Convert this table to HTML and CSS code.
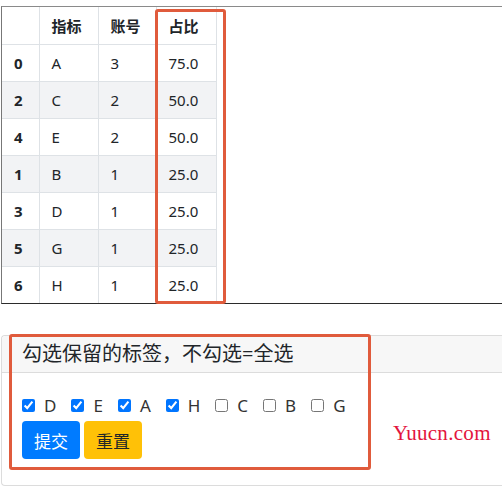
FILE: index.html
```html
<!DOCTYPE html>
<html lang="zh">
<head>
<meta charset="utf-8">
<link rel="stylesheet" href="styles.css">
</head>
<body>
<div class="frame">
  <table class="df">
    <thead>
      <tr><th class="c0"></th><th class="c1">指标</th><th class="c2">账号</th><th class="c3">占比</th></tr>
    </thead>
    <tbody>
      <tr><th>0</th><td>A</td><td>3</td><td>75.0</td></tr>
      <tr><th>2</th><td>C</td><td>2</td><td>50.0</td></tr>
      <tr><th>4</th><td>E</td><td>2</td><td>50.0</td></tr>
      <tr><th>1</th><td>B</td><td>1</td><td>25.0</td></tr>
      <tr><th>3</th><td>D</td><td>1</td><td>25.0</td></tr>
      <tr><th>5</th><td>G</td><td>1</td><td>25.0</td></tr>
      <tr><th>6</th><td>H</td><td>1</td><td>25.0</td></tr>
    </tbody>
  </table>
  <div class="mark mark-col"></div>
</div>

<div class="card">
  <div class="card-header">勾选保留的标签，不勾选=全选</div>
  <div class="card-body">
    <div class="checks">
      <label class="chk"><input type="checkbox" checked><span>D</span></label>
      <label class="chk"><input type="checkbox" checked><span>E</span></label>
      <label class="chk"><input type="checkbox" checked><span>A</span></label>
      <label class="chk"><input type="checkbox" checked><span>H</span></label>
      <label class="chk"><input type="checkbox"><span>C</span></label>
      <label class="chk"><input type="checkbox"><span>B</span></label>
      <label class="chk"><input type="checkbox"><span>G</span></label>
    </div>
    <div class="buttons">
      <button class="btn btn-primary">提交</button>
      <button class="btn btn-warning">重置</button>
    </div>
  </div>
  <div class="mark mark-card"></div>
  <div class="watermark">Yuucn.com</div>
</div>
</body>
</html>
```
FILE: styles.css
```css
html, body {
  margin: 0;
  padding: 0;
  background: #fff;
  overflow: hidden;
}
body {
  width: 502px;
  height: 489px;
  font-family: "Noto Sans", "Noto Sans CJK SC", sans-serif;
  color: #212529;
}
.frame {
  position: relative;
  margin-top: 6px;
  margin-left: 1px;
  border-top: 1px solid #8a8a8a;
  border-left: 1px solid #777;
  border-bottom: 1px solid #2b2b2b;
}
.df {
  border-collapse: collapse;
  font-size: 15px;
}
.df th, .df td {
  height: 37px;
  padding: 0 12px;
  text-align: left;
  border-right: 1px solid #dee2e6;
  border-bottom: 1px solid #dee2e6;
  font-weight: normal;
  box-sizing: border-box;
}
.df tbody tr:last-child th,
.df tbody tr:last-child td { border-bottom: none; }
.df th { font-weight: bold; }
.df .c0 { width: 37px; }
.df .c1 { width: 59px; }
.df .c2 { width: 58px; }
.df .c3 { width: 60px; }
.df tbody tr:nth-child(even) { background: #f2f3f5; }
.mark {
  position: absolute;
  border: 3px solid #e05b3c;
  border-radius: 3px;
  box-sizing: border-box;
}
.mark-col {
  left: 153px;
  top: 2px;
  width: 71px;
  height: 295px;
}
.card {
  position: relative;
  margin-top: 31px;
  margin-left: 1px;
  border: 1px solid #dcdcdc;
  border-right: none;
  border-radius: 4px 0 0 4px;
}
.card-header {
  height: 36px;
  line-height: 36px;
  padding: 0 20px;
  background: #f7f7f7;
  border-bottom: 1px solid #dcdcdc;
  font-size: 20px;
  border-radius: 4px 0 0 0;
}
.card-body {
  padding: 20px 20px 26px;
}
.checks {
  display: flex;
  align-items: center;
  height: 24px;
}
.chk {
  display: flex;
  align-items: center;
  margin-right: 15px;
  font-size: 17px;
  color: #333;
}
.chk input {
  margin: 0 9px 0 0;
  width: 13px;
  height: 13px;
}
.buttons {
  display: flex;
  gap: 4px;
  margin-top: 4px;
}
.btn {
  width: 58px;
  height: 38px;
  border: 1px solid transparent;
  border-radius: 4px;
  font-family: "Noto Sans CJK SC", sans-serif;
  font-size: 17px;
  padding: 0;
}
.btn-primary { background: #007bff; color: #fff; }
.btn-warning { background: #ffc107; color: #212529; }
.mark-card {
  left: 7px;
  top: -2px;
  width: 362px;
  height: 136px;
}
.watermark {
  position: absolute;
  left: 391px;
  top: 85px;
  font-family: "Liberation Serif", serif;
  font-size: 21px;
  color: #e3143d;
  letter-spacing: 0.3px;
}
```
